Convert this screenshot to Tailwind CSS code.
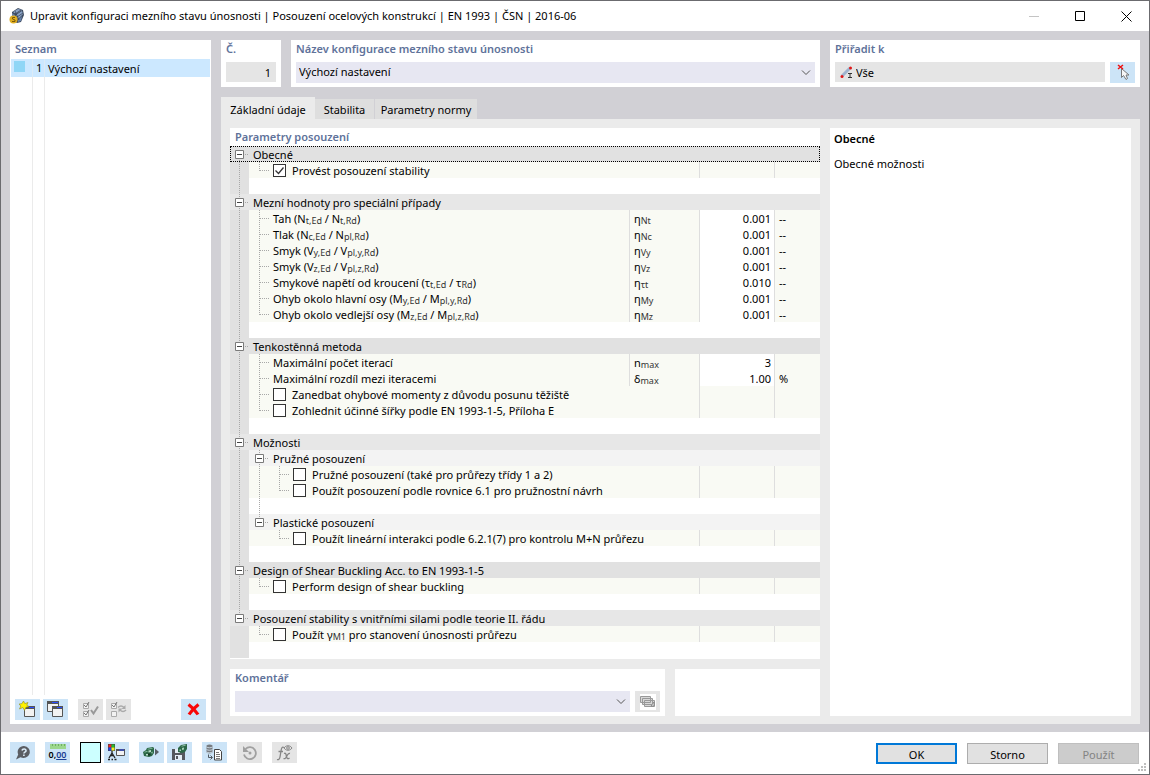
<!DOCTYPE html>
<html lang="cs">
<head>
<meta charset="utf-8">
<title>Upravit konfiguraci mezního stavu únosnosti</title>
<meta name="viewport" content="width=device-width, initial-scale=1">
<script src="https://cdn.jsdelivr.net/npm/@tailwindcss/browser@4"></script>
</head>
<body class="flex min-h-screen flex-col border border-[#6b6b6f] bg-[#d1d0d5] font-['Noto_Sans','Liberation_Sans',sans-serif] text-[11px] leading-4 text-black">

<header class="flex h-[30px] shrink-0 items-center bg-white pl-2">
  <svg class="mr-[5px] size-4" viewBox="0 0 16 16" aria-hidden="true">
    <path d="M3 4 9 0l5 2 1 5-3 7-4 1-5-3z" fill="#3f4c60"/>
    <path d="M4 4 9 1l4 1-6 4zM7 7l6-4 1 3-5 5z" fill="#8ba4c8"/>
    <path d="M3 5l3 2 1 4-4-1zM9 12l4-4-1 5-3 1z" fill="#6782ab"/>
    <path d="M6 6 12 2M8 9l6-4M6 3l4 9" stroke="#2c3748" stroke-width=".7"/>
    <circle cx="4.500" cy="11.500" r="4" fill="#e0ae1f"/>
    <path d="M6 9.500H3.500v1.500L6 12v1.500H3" fill="none" stroke="#7a5a08"/>
  </svg>
  <h1 class="flex-1">Upravit konfiguraci mezního stavu únosnosti | Posouzení ocelových konstrukcí | EN 1993 | ČSN | 2016-06</h1>
  <button class="flex h-full w-[46px] items-center justify-center" aria-label="Minimalizovat" disabled><svg class="size-[11px]" viewBox="0 0 11 11"><path d="M0 5.500h10" stroke="#c4c4c4"/></svg></button>
  <button class="flex h-full w-[46px] items-center justify-center" aria-label="Maximalizovat"><svg class="size-[11px]" viewBox="0 0 11 11"><path d="M.5.500h9v9h-9z" fill="none" stroke="#000"/></svg></button>
  <button class="flex h-full w-[46px] items-center justify-center" aria-label="Zavřít"><svg class="size-[11px]" viewBox="0 0 11 11"><path d="M.5.500l10 10M10.500.500l-10 10" stroke="#000"/></svg></button>
</header>

<main class="flex flex-1 gap-2.5 px-[9px] pt-[9px] pb-2">
  <section class="flex w-[201px] shrink-0 flex-col bg-white px-px" aria-labelledby="seznam">
    <h2 id="seznam" class="h-[19px] px-1 pt-px font-semibold text-[#60729a]">Seznam</h2>
    <ul class="flex flex-1 flex-col">
      <li class="flex h-[18px] items-center bg-[#cce8ff]">
        <span class="mx-[3px] -mt-1 size-[11px] bg-[#8fd6f6]"></span>
        <span class="ml-1 h-full w-[13px] border-x border-[#dcebf6] pl-[3px] pt-px">1</span>
        <span class="pl-[3px] pt-px">Výchozí nastavení</span>
      </li>
      <li class="ml-[21px] w-[13px] flex-1 border-x border-[#ebebeb]" aria-hidden="true"></li>
    </ul>
    <div class="flex gap-[3px] px-1 pt-1 pb-1">
      <button class="flex h-[21px] w-[25px] items-center justify-center bg-[#cce4f7]" aria-label="Nový">
        <svg class="size-[17px]" viewBox="0 0 17 17"><path d="M5.500 6.500h10v9h-10z" fill="#f2f2f2" stroke="#555"/><path d="M5 5h11v3H5z" fill="#555"/><path d="M10 6h5v1h-5z" fill="#2a4cff"/><path d="M4.500 0l1.300 2.600L9 1.500 7.800 4.200 10 5.500 7 6.200 5.500 9.500 4 6.500.5 8l1.300-3L0 3l2.800-.3z" fill="#fff200" stroke="#8c8a20" stroke-width=".6"/></svg>
      </button>
      <button class="flex h-[21px] w-[25px] items-center justify-center bg-[#cce4f7]" aria-label="Kopírovat">
        <svg class="size-[17px]" viewBox="0 0 17 17"><path d="M.5 1.500h11v9H.500z" fill="#f2f2f2" stroke="#555"/><path d="M0 0h12v3H0z" fill="#555"/><path d="M5 1h6v1H5z" fill="#2a4cff"/><path d="M5.500 6.500h10v9h-10z" fill="#f2f2f2" stroke="#555"/><path d="M5 5h11v3H5z" fill="#555"/><path d="M10 6h5v1h-5z" fill="#2a4cff"/></svg>
      </button>
      <button class="ml-[7px] flex h-[21px] w-[25px] items-center justify-center bg-[#e5e5e5]" aria-label="Vybrat vše" disabled>
        <svg class="size-[17px]" viewBox="0 0 17 17" fill="none"><path d="M1.500 2.500h5v5h-5zM1.500 10.500h5v5h-5z" fill="#f2f2f2" stroke="#aaa"/><path d="M2 4l2 2 3-5M2 12l2 2 3-5" stroke="#777"/><path d="M9 9l2.500 3.500L16 5.500" stroke="#999" stroke-width="2"/></svg>
      </button>
      <button class="flex h-[21px] w-[25px] items-center justify-center bg-[#e5e5e5]" aria-label="Obrátit výběr" disabled>
        <svg class="size-[17px]" viewBox="0 0 17 17" fill="none"><path d="M1.500 2.500h5v5h-5zM1.500 10.500h5v5h-5z" fill="#f2f2f2" stroke="#aaa"/><path d="M2 4l2 2 3-5" stroke="#777"/><path d="M8 6.500c2-2 4-2 6 0M16 9c-2 2-4 2-6 0" stroke="#aaa" stroke-width="1.500"/><path d="M15.500 4v4h-4zM8.500 11.500v-4h4z" fill="#aaa"/></svg>
      </button>
      <button class="ml-auto flex h-[21px] w-[25px] items-center justify-center bg-[#cce4f7]" aria-label="Smazat">
        <svg class="size-[13px]" viewBox="0 0 13 13"><path d="M1.500 1.500c4 3 7 6 9.500 10M11.500 1.500c-4 3-7 6-9.500 10" stroke="#f80808" stroke-width="3.200" fill="none"/></svg>
      </button>
    </div>
  </section>

  <div class="flex min-w-0 flex-1 flex-col">
    <div class="flex h-[47px] gap-2.5">
      <section class="w-[60px] bg-white px-[5px] pt-px">
        <label for="cislo" class="block h-[21px] font-semibold text-[#60729a]">Č.</label>
        <input id="cislo" readonly value="1" class="block h-5 w-full bg-[#e5e5e5] px-[5px] pt-px text-right">
      </section>
      <section class="min-w-0 flex-1 bg-white px-[5px] pt-px">
        <label for="nazev" class="block h-[21px] font-semibold text-[#60729a]">Název konfigurace mezního stavu únosnosti</label>
        <div class="grid items-center">
          <select id="nazev" class="col-start-1 row-start-1 h-[21px] w-full appearance-none bg-[#e7e7f2] px-[3px] pb-0.5"><option>Výchozí nastavení</option></select>
          <svg class="pointer-events-none col-start-1 row-start-1 mr-1 h-[6px] w-[10px] justify-self-end" viewBox="0 0 10 6"><path d="M1 .500l4 4 4-4" fill="none" stroke="#555"/></svg>
        </div>
      </section>
      <section class="w-[310px] bg-white px-[5px] pt-px">
        <label for="priradit" class="block h-[21px] font-semibold text-[#60729a]">Přiřadit k</label>
        <div class="flex gap-[5px]">
          <div class="flex h-5 min-w-0 flex-1 items-center bg-[#e5e5e5] pl-[5px]">
            <svg class="mr-[3px] size-[13px] shrink-0" viewBox="0 0 13 13"><path d="M2 10 10 2" stroke="#9fb4cf" stroke-width="3"/><circle cx="2" cy="10.500" r="1.500" fill="#e01818"/><circle cx="10.500" cy="2" r="1.500" fill="#e01818"/><path d="M8 7.500h4M8 11.500h4M10 7.500v4" stroke="#333"/></svg>
            <input id="priradit" readonly value="Vše" class="h-5 min-w-0 flex-1 bg-transparent pt-px">
          </div>
          <button class="flex h-[21px] w-[25px] items-center justify-center bg-[#cce4f7]" aria-label="Vybrat v modelu">
            <svg class="size-[17px]" viewBox="0 0 17 17"><path d="M7.500 4.500v9l2-2 2.500 4 1.500-1-1.500-3.500H15z" fill="#f7f7f7" stroke="#777"/><path d="M4 1l5 4M9 1L4 5" stroke="#f01010" stroke-width="1.500"/></svg>
          </button>
        </div>
      </section>
    </div>

    <div class="mt-2.5 flex h-[22px] items-end" role="tablist">
      <button role="tab" aria-selected="true" class="h-[22px] w-[94px] bg-[#ebebeb] pt-1">Základní údaje</button>
      <button role="tab" aria-selected="false" class="h-5 w-[60px] border-r border-[#d1d0d5] bg-[#dedede] pt-0.5">Stabilita</button>
      <button role="tab" aria-selected="false" class="h-5 w-[102px] bg-[#dedede] pt-0.5">Parametry normy</button>
    </div>

    <div class="flex flex-1 gap-2.5 bg-[#ebebeb] p-[9px] pb-2" role="tabpanel">
      <div class="flex min-w-0 flex-1 flex-col gap-2.5">
        <section class="flex-1 bg-white">
          <h2 class="h-[18px] px-[5px] pt-px font-semibold text-[#60729a]">Parametry posouzení</h2>
          <table class="w-full table-fixed border-separate border-spacing-0">
            <colgroup><col class="w-[19px]"><col><col class="w-[70px]"><col class="w-[75px]"><col class="w-[46px]"></colgroup>
            <tbody id="rows"></tbody>
          </table>
        </section>
        <div class="flex h-[47px] gap-2.5">
          <section class="min-w-0 flex-1 bg-white px-[5px] pt-px">
            <label for="komentar" class="block h-[21px] font-semibold text-[#60729a]">Komentář</label>
            <div class="flex gap-[5px]">
              <div class="grid flex-1 items-center">
                <select id="komentar" class="col-start-1 row-start-1 h-[21px] w-full appearance-none bg-[#e7e7f2] px-[3px]"><option></option></select>
                <svg class="pointer-events-none col-start-1 row-start-1 mr-1 h-[6px] w-[10px] justify-self-end" viewBox="0 0 10 6"><path d="M1 .500l4 4 4-4" fill="none" stroke="#555"/></svg>
              </div>
              <button class="flex h-[21px] w-[25px] items-center justify-center bg-[#e5e5e5]" aria-label="Komentáře" disabled>
                <svg class="size-4 bg-white" viewBox="0 0 16 16"><path d="M.5 2.500h10v6H.500zM2.500 4.500h10v6h-10zM4.500 6.500h10v6h-10z" fill="#d8d8d8" stroke="#999"/><path d="M11 12l3-4v4z" fill="#fff" stroke="#888"/></svg>
              </button>
            </div>
          </section>
          <section class="w-[145px] bg-white"></section>
        </div>
      </div>
      <aside class="w-[301px] shrink-0 bg-white px-1 pt-[3px]">
        <h2 class="font-semibold">Obecné</h2>
        <p class="mt-[9px]">Obecné možnosti</p>
      </aside>
    </div>
  </div>
</main>

<footer class="flex h-[42px] shrink-0 items-start bg-white pt-2.5 pr-2.5 pl-[9px]">
  <div class="flex gap-[3px]">
    <button class="flex h-[21px] w-[25px] items-center justify-center bg-[#cce4f7]" aria-label="Nápověda">
      <svg class="size-4" viewBox="0 0 16 16"><path d="M9 1a6.200 6 0 1 1-3.500 11.200L1 14.500 3.200 9.500A6.200 6 0 0 1 9 1z" fill="#5a5d63"/><path d="M7 5.500c.4-2 4.300-2 4 .300-.2 1.500-2.100 1.200-2.100 2.700M8.900 9.500v1.500" fill="none" stroke="#dcecf8" stroke-width="1.600"/></svg>
    </button>
    <button class="ml-[7px] flex h-[21px] w-[25px] flex-col items-center justify-center bg-[#cce4f7]" aria-label="Jednotky">
      <svg class="h-[5px] w-4 shrink-0" viewBox="0 0 16 5"><path d="M0 0h16v5H0z" fill="#9bd78d"/><path d="M2.500 0v2M5.500 0v2M8.500 0v2M11.500 0v2M14.500 0v2" stroke="#6fae64"/></svg>
      <span class="text-[9px] leading-[12px] font-semibold">0,<span class="text-[#1c3f94] underline">00</span></span>
    </button>
    <button class="ml-[7px] size-[21px] border border-black bg-[#ccffff]" aria-label="Barva"></button>
    <button class="flex h-[21px] w-[25px] items-center justify-center bg-[#cce4f7]" aria-label="Zobrazení">
      <svg class="size-[17px]" viewBox="0 0 17 17"><path d="M0 0h7v7H0z" fill="#444"/><path d="M.5.500h3v3h-3z" fill="#f02020"/><path d="M3.500.500h3v3h-3z" fill="#20c030"/><path d="M.5 3.500h3v3h-3z" fill="#2040f0"/><path d="M3.500 3.500h3v3h-3z" fill="#f8f020"/><path d="M4 7v2L1 14M4 9l3 5M2.500 11.500h3M0 15.500h2M3.500 15.500h1.500M6.500 15.500h2" stroke="#222" fill="none" stroke-width="1.300"/><path d="M8.500 5.500h8v6h-8z" fill="#f2f2f2" stroke="#555"/><path d="M8 5h9v2H8z" fill="#555"/><path d="M11 5.500h5v1h-5z" fill="#2a4cff"/></svg>
    </button>
    <button class="ml-[7px] flex h-[21px] w-[25px] items-center justify-center bg-[#cce4f7]" aria-label="Načíst výchozí">
      <svg class="h-[13px] w-[17px]" viewBox="0 0 17 13"><path d="M0 6l3-2 1-2 6-1 1 1v5l-2 3-3 1-5-1z" fill="#2c6848"/><path d="M4 3l5-1 1 .500-4.500 1zM1 6l3-1 1 .500-3 1z" fill="#8cc7a4"/><path d="M5.500 4.500l2.500-.5v2l-2.500.5zM3 8h2v1.500H3zM8 7l1.500-1.500v2z" fill="#b7dcc6"/><path d="M5 7.500h2.500v2H5z" fill="#143623"/><path d="M12 2.500v7l4-3.500z" fill="#5a5f66"/></svg>
    </button>
    <button class="flex h-[21px] w-[25px] items-center justify-center bg-[#cce4f7]" aria-label="Uložit jako výchozí">
      <svg class="size-[17px]" viewBox="0 0 17 17"><path d="M1 5h12l1 1v10H1z" fill="#55585e"/><path d="M4 5h5v4H4zM4 11h7v5H4z" fill="#e5eef6"/><path d="M5 12h2v3H5z" fill="#55585e"/><path d="M7 4l3-3 6-1v5l-2 3-3 1-4-1z" fill="#2c6848"/><path d="M10 2l4-1 1 .500-4 1zM11 4l2-.5v2l-2 .5zM8.500 5.500h1.500V7H8.500z" fill="#a5d3b7"/></svg>
    </button>
    <button class="ml-[7px] flex h-[21px] w-[25px] items-center justify-center bg-[#cce4f7]" aria-label="Kopírovat z databáze">
      <svg class="size-[17px]" viewBox="0 0 17 17" fill="none"><path d="M.5 1.500C2 .3 5 .3 6.500 1.500v7C5 9.700 2 9.700.5 8.500z" fill="#777b80"/><path d="M.5 3c1.500 1 4.500 1 6 0M.5 5.500c1.500 1 4.500 1 6 0M.5 8c1.500 1 4.500 1 6 0" stroke="#dcecf8" stroke-width=".8"/><path d="M2.500 10.500v3H6M4.500 11.500l2 2-2 2" stroke="#505860"/><path d="M8.500 5.500h5l2 2v8.500h-7z" fill="#fff" stroke="#444"/><path d="M10 8.500h3M10 10.500h4M10 12.500h4M10 14.500h4" stroke="#555" stroke-width=".8"/></svg>
    </button>
    <button class="ml-[7px] flex h-[21px] w-[25px] items-center justify-center bg-[#e5e5e5]" aria-label="Obnovit" disabled>
      <svg class="size-4" viewBox="0 0 16 16"><path d="M3.500 4A6 6 0 1 1 2 9.500" fill="none" stroke="#a0a0a0" stroke-width="1.800"/><path d="M1 1v6h6z" fill="#a0a0a0"/><circle cx="8" cy="8" r="1.500" fill="#a0a0a0"/></svg>
    </button>
    <button class="ml-[7px] flex h-[21px] w-[25px] items-center justify-center bg-[#e5e5e5]" aria-label="Vzorce" disabled>
      <svg class="size-[17px]" viewBox="0 0 17 17" fill="none" stroke="#858585"><path d="M8 3.500C6 2.500 5.500 4 5 7l-1 6c-.3 2-1.500 3-3 2.500M2.500 7.500H7" stroke-width="1.300"/><path d="M8 9.500c2-1 2 1 2.500 3s1 3 3 1.500M14 9.500c-2-.5-3 2-4 4-.5 1-1.500 1.500-2.500 1" stroke-width="1.300"/><path d="M8 4c2-3 6-3 8 0-2 3-6 3-8 0z"/><circle cx="12" cy="4" r="1.300"/></svg>
    </button>
  </div>
  <div class="ml-auto flex gap-2.5 pt-px">
    <button class="h-[21px] w-[81px] border-2 border-[#0078d7] bg-[#e1e1e1] pt-0.5">OK</button>
    <button class="h-[21px] w-[81px] border border-[#adadad] bg-[#e1e1e1] pt-0.5">Storno</button>
    <button class="h-[21px] w-[81px] border border-[#bfbfbf] bg-[#cccccc] pt-0.5 text-[#838383]" disabled>Použít</button>
  </div>
  <svg class="absolute right-1 bottom-1 size-2" viewBox="0 0 8 8" aria-hidden="true"><path d="M6 0h2v2H6zM3 3h2v2H3zM6 3h2v2H6zM0 6h2v2H0zM3 6h2v2H3zM6 6h2v2H6z" fill="#bfbfbf"/></svg>
</footer>

<script>
// Line pieces of the tree. Each one is as high as a row.
const dots = 'stroke="#a8a8a8" stroke-dasharray="1 1"';
const box = x => `<path d="M${x + .5} 4.500h8v8h-8z" fill="#fff" stroke="#7a7a7a"/><path d="M${x + 2} 8.500h5" stroke="#444"/>`;
const svg = (w, body) => `<svg class="${w === 19 ? 'block h-4 w-[19px] shrink-0' : 'block h-4 w-5 shrink-0'}" viewBox="0 0 ${w} 16" aria-hidden="true">${body}</svg>`;
const line = (x, a, b) => `<path d="M${x}.5 ${a}V${b}" ${dots}/>`;
const dash = (a, b) => `<path d="M${a} 8.500H${b}" ${dots}/>`;
const gutter = on => `<td class="bg-[#e1e1e1] p-0">${svg(19, on ? line(9, 0, 16) : '')}</td>`;
const branch = end => svg(20, line(10, 0, end ? 9 : 16) + dash(11, 21));
const sub = t => t.replace(/_\{(.*?)\}/g, '<span class="text-[9px] text-[#333]"><span class="relative top-px">$1</span></span>');

let n = 0, html = '', last = false;
const head = (t, alt, first) => {
  html += `<tr class="${alt ? 'h-4 bg-[#e7e7e7]' : 'h-4 bg-[#e1e1e1]'}"><th colspan="5" scope="rowgroup" class="${first ? 'p-0 text-left font-normal outline-1 -outline-offset-1 outline-dotted outline-black' : 'p-0 text-left font-normal'}"><div class="flex h-4">${svg(19, line(9, first ? 8 : 0, last ? 8 : 16) + box(5) + dash(15, 19))}<span class="pl-1 pt-px">${t}</span></div></th></tr>`;
};
const group = (t, more) => {
  html += `<tr class="h-4 bg-[#f3f3f3]">${gutter(true)}<th colspan="4" scope="rowgroup" class="p-0 text-left font-normal"><div class="flex h-4">${svg(20, line(10, 0, more ? 16 : 8) + box(6) + dash(16, 20))}<span class="pl-1 pt-px">${t}</span></div></th></tr>`;
};
const gap = (on, inner) => {
  html += `<tr class="h-4 bg-white">${gutter(on)}<td colspan="4" class="p-0">${inner ? svg(20, line(10, 0, 16)) : ''}</td></tr>`;
};
const check = (t, o = {}) => {
  const id = 'c' + n++;
  html += `<tr class="h-4 bg-[#f9faf4]">${gutter(!last)}<td colspan="2" class="p-0"><div class="flex h-4">${o.deep ? svg(20, o.deep === 2 ? line(10, 0, 16) : '') : ''}${branch(o.end)}<input type="checkbox" id="${id}" ${o.on ? 'checked' : ''} class="peer ml-1 mt-0.5 size-[13px] shrink-0 appearance-none border border-[#333] bg-white"><svg class="pointer-events-none -ml-[13px] mt-0.5 hidden size-[13px] peer-checked:block" viewBox="0 0 13 13"><path d="M2.500 6.500l3 3 5-6" fill="none" stroke="#333" stroke-width="1.300"/></svg><label for="${id}" class="pl-1.5 pt-px">${sub(t)}</label></div></td><td class="border-l border-[#dedede] p-0"></td><td class="border-l border-[#dedede] p-0"></td></tr>`;
};
const value = (t, s, v, u, end) => {
  const id = 'v' + n++;
  html += `<tr class="h-4 bg-[#f9faf4]">${gutter(true)}<td class="p-0"><div class="flex h-4">${branch(end)}<label for="${id}" class="pl-1 pt-px">${sub(t)}</label></div></td><td class="border-l border-[#dedede] p-0"><div class="h-4 pl-1 pt-px">${sub(s)}</div></td><td class="border-l border-[#dedede] bg-white p-0"><input id="${id}" value="${v}" class="block h-4 w-full pr-[3px] pt-px text-right"></td><td class="border-l border-[#dedede] p-0"><div class="h-4 pl-1 pt-px">${u}</div></td></tr>`;
};

head('Obecné', false, true);
check('Provést posouzení stability', {on: true, end: true});
gap(true);
head('Mezní hodnoty pro speciální případy', true);
value('Tah (N_{t,Ed} / N_{t,Rd})', 'η_{Nt}', '0.001', '--');
value('Tlak (N_{c,Ed} / N_{pl,Rd})', 'η_{Nc}', '0.001', '--');
value('Smyk (V_{y,Ed} / V_{pl,y,Rd})', 'η_{Vy}', '0.001', '--');
value('Smyk (V_{z,Ed} / V_{pl,z,Rd})', 'η_{Vz}', '0.001', '--');
value('Smykové napětí od kroucení (τ_{t,Ed} / τ_{Rd})', 'η_{τt}', '0.010', '--');
value('Ohyb okolo hlavní osy (M_{y,Ed} / M_{pl,y,Rd})', 'η_{My}', '0.001', '--');
value('Ohyb okolo vedlejší osy (M_{z,Ed} / M_{pl,z,Rd})', 'η_{Mz}', '0.001', '--', true);
gap(true);
head('Tenkostěnná metoda', false);
value('Maximální počet iterací', 'n_{max}', '3', '');
value('Maximální rozdíl mezi iteracemi', 'δ_{max}', '1.00', '%');
check('Zanedbat ohybové momenty z důvodu posunu těžiště');
check('Zohlednit účinné šířky podle EN 1993-1-5, Příloha E', {end: true});
gap(true);
head('Možnosti', true);
group('Pružné posouzení', true);
check('Pružné posouzení (také pro průřezy třídy 1 a 2)', {deep: 2});
check('Použít posouzení podle rovnice 6.1 pro pružnostní návrh', {deep: 2, end: true});
gap(true, true);
group('Plastické posouzení');
check('Použít lineární interakci podle 6.2.1(7) pro kontrolu M+N průřezu', {deep: 1, end: true});
gap(true);
head('Design of Shear Buckling Acc. to EN 1993-1-5', false);
check('Perform design of shear buckling', {end: true});
gap(true);
last = true;
head('Posouzení stability s vnitřními silami podle teorie II. řádu', true);
check('Použít γ_{M1} pro stanovení únosnosti průřezu', {end: true});
gap(false);
document.getElementById('rows').innerHTML = html;
</script>
</body>
</html>
